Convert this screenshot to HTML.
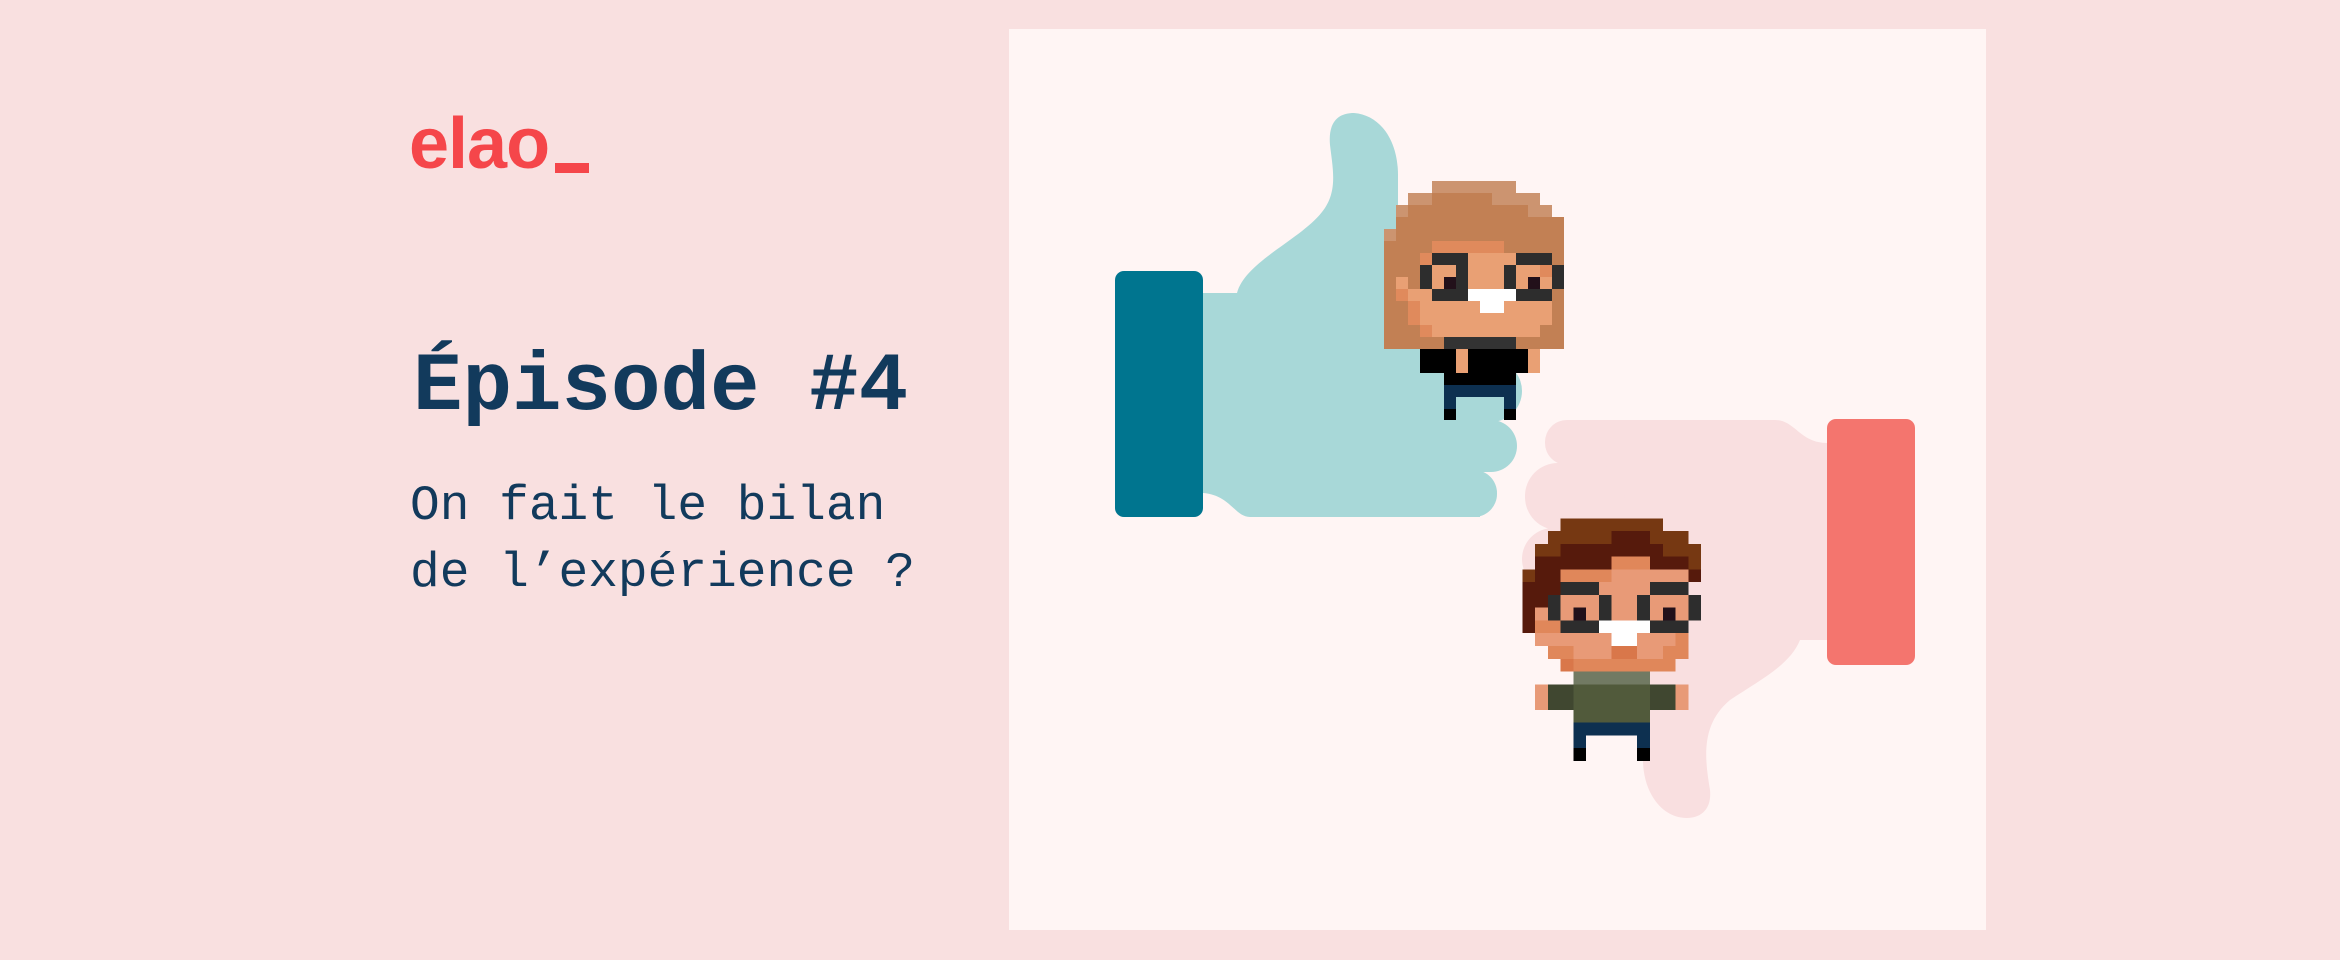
<!DOCTYPE html>
<html><head><meta charset="utf-8"><style>
html,body{margin:0;padding:0}
body{width:2340px;height:960px;background:#f9e0e0;position:relative;overflow:hidden}
.panel{position:absolute;left:1009px;top:29px;width:977px;height:901px;background:#fff5f4}
.logo{position:absolute;left:409px;top:108px;font:bold 72px/1 "Liberation Sans",sans-serif;color:#f5464a;letter-spacing:-1px}
.us{position:absolute;left:555px;top:163px;width:34px;height:10px;background:#f5464a}
.title{position:absolute;left:413px;top:346px;font:bold 82.5px/1 "Liberation Mono",monospace;color:#123a5c;white-space:pre}
.sub{position:absolute;left:410px;top:473px;font:49.5px/67px "Liberation Mono",monospace;color:#123a5c;white-space:pre}
svg{position:absolute;left:0;top:0}
</style></head><body>
<div class="panel"></div>
<div class="logo">elao</div>
<div class="us"></div>
<div class="title">Épisode #4</div>
<div class="sub">On fait le bilan
de l’expérience ?</div>
<svg width="2340" height="960" viewBox="0 0 2340 960" shape-rendering="crispEdges">
<g fill="#f9dfe0" shape-rendering="auto">
<path d="M1827,443 C1800,443 1795,420 1775,420 L1580,420 L1580,640 L1645,640 L1643,760 C1643,790 1660,818 1687,818 C1700,818 1712,810 1710,790 C1705,760 1700,725 1730,700 C1760,680 1790,665 1800,640 L1827,640 Z"/>
<rect x="1545" y="420" width="100" height="45" rx="22"/>
<rect x="1525" y="463" width="100" height="67" rx="33"/>
<rect x="1522" y="528" width="100" height="62" rx="31"/>
<rect x="1530" y="588" width="100" height="54" rx="27"/>
</g>
<rect x="1827" y="419" width="88" height="246" rx="9" fill="#f4756e" shape-rendering="auto"/>
<g fill="#a8d8d8" shape-rendering="auto">
<path d="M1203,293 L1237,293 C1245,262 1300,240 1322,212 C1338,192 1333,170 1330,145 C1328,122 1338,113 1354,113 C1380,115 1398,140 1398,175 L1398,300 L1480,300 L1480,517 L1250,517 C1235,517 1230,495 1203,493 Z"/>
<rect x="1430" y="300" width="90" height="62" rx="31"/>
<rect x="1430" y="360" width="92" height="62" rx="31"/>
<rect x="1430" y="420" width="87" height="52" rx="26"/>
<rect x="1430" y="470" width="67" height="47" rx="23"/>
</g>
<rect x="1115" y="271" width="88" height="246" rx="9" fill="#00758f" shape-rendering="auto"/>

<g transform="translate(1384,181) scale(12)">
<g fill="#cc9470"><rect x="4" y="0" width="7" height="1"/><rect x="2" y="1" width="2" height="1"/><rect x="9" y="1" width="4" height="1"/><rect x="1" y="2" width="1" height="1"/><rect x="12" y="2" width="2" height="1"/><rect x="0" y="4" width="1" height="1"/></g>
<g fill="#c28054"><rect x="4" y="1" width="5" height="1"/><rect x="2" y="2" width="10" height="1"/><rect x="1" y="3" width="14" height="1"/><rect x="1" y="4" width="14" height="1"/><rect x="0" y="5" width="15" height="9"/></g>
<g fill="#e08a5c"><rect x="4" y="5" width="6" height="1"/><rect x="3" y="6" width="1" height="1"/><rect x="13" y="7" width="1" height="1"/><rect x="1" y="9" width="1" height="1"/><rect x="2" y="10" width="1" height="2"/><rect x="3" y="12" width="1" height="1"/></g>
<g fill="#e9a074"><rect x="7" y="6" width="4" height="1"/><rect x="4" y="7" width="2" height="1"/><rect x="7" y="7" width="3" height="1"/><rect x="11" y="7" width="2" height="1"/><rect x="1" y="8" width="1" height="1"/><rect x="4" y="8" width="1" height="1"/><rect x="7" y="8" width="3" height="1"/><rect x="11" y="8" width="1" height="1"/><rect x="13" y="8" width="1" height="1"/><rect x="2" y="9" width="2" height="1"/><rect x="3" y="10" width="5" height="1"/><rect x="10" y="10" width="4" height="1"/><rect x="3" y="11" width="11" height="1"/><rect x="4" y="12" width="9" height="1"/><rect x="6" y="14" width="1" height="2"/><rect x="12" y="14" width="1" height="2"/></g>
<g fill="#2d2d2d"><rect x="4" y="6" width="3" height="1"/><rect x="11" y="6" width="3" height="1"/><rect x="3" y="7" width="1" height="2"/><rect x="6" y="7" width="1" height="2"/><rect x="10" y="7" width="1" height="2"/><rect x="14" y="7" width="1" height="2"/><rect x="4" y="9" width="3" height="1"/><rect x="11" y="9" width="3" height="1"/></g>
<g fill="#22101a"><rect x="5" y="8" width="1" height="1"/><rect x="12" y="8" width="1" height="1"/></g>
<g fill="#fff"><rect x="7" y="9" width="4" height="1"/><rect x="8" y="10" width="2" height="1"/></g>
<rect x="5" y="13" width="6" height="1" fill="#333"/>
<g fill="#000"><rect x="3" y="14" width="3" height="2"/><rect x="7" y="14" width="5" height="2"/><rect x="5" y="16" width="6" height="1"/><rect x="5" y="19" width="1" height="0.9"/><rect x="10" y="19" width="1" height="0.9"/></g>
<g fill="#0d3050"><rect x="5" y="17" width="6" height="1"/><rect x="5" y="18" width="1" height="1"/><rect x="10" y="18" width="1" height="1"/></g>
</g>

<g transform="translate(1522.3,518.3) scale(12.77)">
<g fill="#763812"><rect x="3" y="0" width="8" height="1"/><rect x="2" y="1" width="5" height="1"/><rect x="10" y="1" width="3" height="1"/><rect x="1" y="2" width="2" height="1"/><rect x="11" y="2" width="3" height="1"/><rect x="13" y="3" width="1" height="1"/><rect x="0" y="4" width="1" height="1"/></g>
<g fill="#561a0c"><rect x="7" y="1" width="3" height="1"/><rect x="3" y="2" width="8" height="1"/><rect x="1" y="3" width="6" height="1"/><rect x="10" y="3" width="3" height="1"/><rect x="1" y="4" width="2" height="1"/><rect x="13" y="4" width="1" height="1"/><rect x="0" y="5" width="3" height="1"/><rect x="0" y="6" width="2" height="1"/><rect x="0" y="7" width="1" height="2"/></g>
<g fill="#e0875a"><rect x="7" y="3" width="3" height="1"/><rect x="3" y="4" width="4" height="1"/><rect x="1" y="8" width="2" height="1"/><rect x="12" y="9" width="1" height="1"/><rect x="2" y="10" width="2" height="1"/><rect x="11" y="10" width="2" height="1"/><rect x="4" y="11" width="8" height="1"/></g>
<g fill="#e89a77"><rect x="7" y="4" width="6" height="1"/><rect x="6" y="5" width="4" height="1"/><rect x="3" y="6" width="3" height="1"/><rect x="7" y="6" width="2" height="1"/><rect x="10" y="6" width="3" height="1"/><rect x="1" y="7" width="1" height="1"/><rect x="3" y="7" width="1" height="1"/><rect x="5" y="7" width="1" height="1"/><rect x="7" y="7" width="2" height="1"/><rect x="10" y="7" width="1" height="1"/><rect x="12" y="7" width="1" height="1"/><rect x="1" y="9" width="6" height="1"/><rect x="9" y="9" width="3" height="1"/><rect x="4" y="10" width="3" height="1"/><rect x="9" y="10" width="2" height="1"/><rect x="1" y="13" width="1" height="2"/><rect x="12" y="13" width="1" height="2"/></g>
<g fill="#2d2d2d"><rect x="3" y="5" width="3" height="1"/><rect x="10" y="5" width="3" height="1"/><rect x="2" y="6" width="1" height="2"/><rect x="6" y="6" width="1" height="2"/><rect x="9" y="6" width="1" height="2"/><rect x="13" y="6" width="1" height="2"/><rect x="3" y="8" width="3" height="1"/><rect x="10" y="8" width="3" height="1"/></g>
<g fill="#22101a"><rect x="4" y="7" width="1" height="1"/><rect x="11" y="7" width="1" height="1"/></g>
<g fill="#fff"><rect x="6" y="8" width="4" height="1"/><rect x="7" y="9" width="2" height="1"/></g>
<g fill="#d9774a"><rect x="7" y="10" width="2" height="1"/><rect x="3" y="11" width="1" height="1"/></g>
<rect x="4" y="12" width="6" height="1" fill="#727a63"/>
<g fill="#404730"><rect x="2" y="13" width="2" height="2"/><rect x="10" y="13" width="2" height="2"/></g>
<rect x="4" y="13" width="6" height="3" fill="#515a3b"/>
<g fill="#0d3050"><rect x="4" y="16" width="6" height="1"/><rect x="4" y="17" width="1" height="1"/><rect x="9" y="17" width="1" height="1"/></g>
<g fill="#000"><rect x="4" y="18" width="1" height="1"/><rect x="9" y="18" width="1" height="1"/></g>
</g>
</svg>
</body></html>
